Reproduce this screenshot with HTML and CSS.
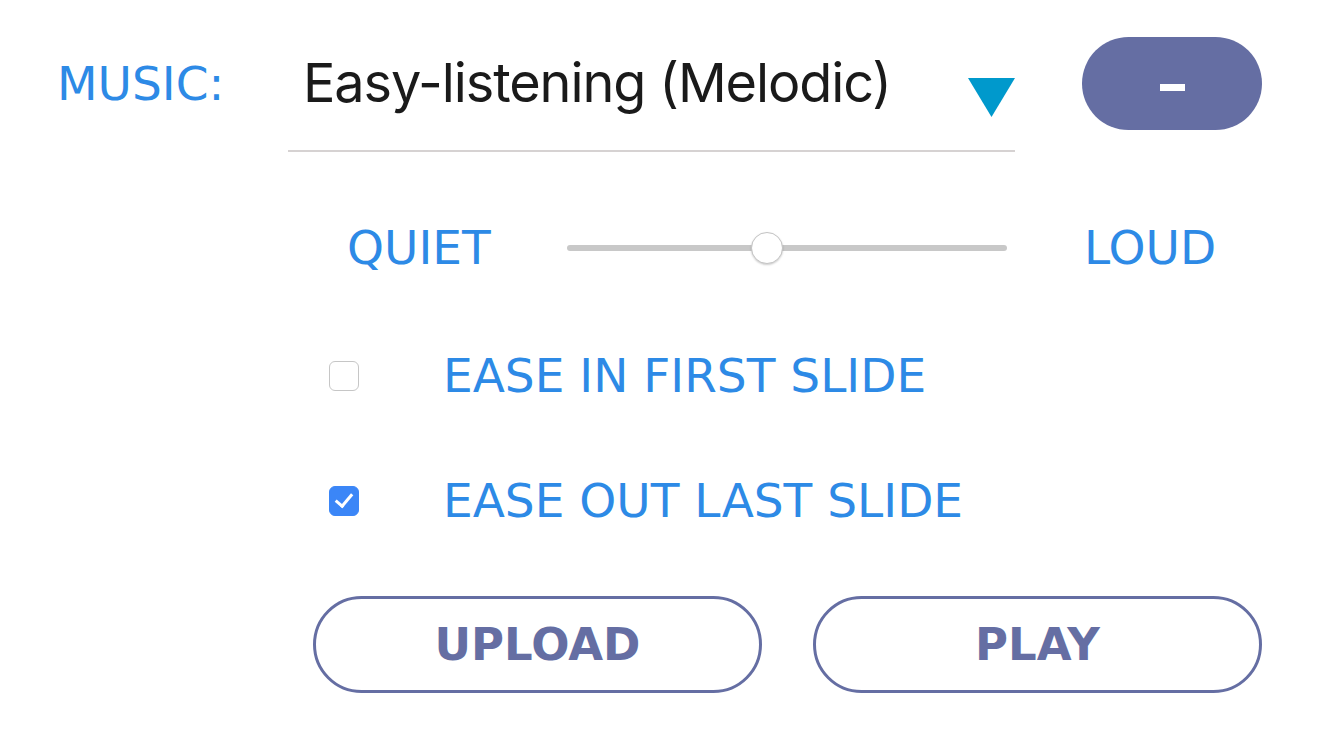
FILE: index.html
```html
<!DOCTYPE html>
<html>
<head>
	<title>Music</title>
	<link rel="stylesheet" href="styles.css">
</head>
<body>
	<div class="panel">
		<div class="row music">
			<span class="label">MUSIC:</span>
			<div class="select">
				<span class="value">Easy-listening (Melodic)</span>
				<svg class="caret" width="47" height="39" viewBox="0 0 47 39"><polygon points="0,0 47,0 23.5,39" fill="#0099cc"/></svg>
			</div>
			<button type="button" class="pill"><span class="dash"></span></button>
		</div>

		<div class="row volume">
			<span class="label quiet">QUIET</span>
			<input type="range" class="slider" min="0" max="100" value="45">
			<span class="label loud">LOUD</span>
		</div>

		<label class="row check">
			<input type="checkbox">
			<span class="label">EASE IN FIRST SLIDE</span>
		</label>

		<label class="row check">
			<input type="checkbox" checked>
			<span class="label">EASE OUT LAST SLIDE</span>
		</label>

		<div class="row actions">
			<button type="button" class="outline">UPLOAD</button>
			<button type="button" class="outline">PLAY</button>
		</div>
	</div>
</body>
</html>
```

FILE: styles.css
```css
body {
	margin: 0;
	background: #fff;
	font-family: "DejaVu Sans", sans-serif;
}

.panel {
	width: 1340px;
	padding-top: 37px;
}

.row {
	display: flex;
	align-items: center;
}

.label {
	color: #2d8ae6;
	font-size: 47px;
	line-height: 60px;
}

/* music row */
.music {
	align-items: flex-start;
	padding-left: 57px;
}

.music .label {
	width: 231px;
	line-height: 93px;
}

.select {
	width: 727px;
	height: 113px;
	border-bottom: 2px solid #d6d2d2;
	display: flex;
	align-items: flex-start;
	padding-left: 15px;
	box-sizing: border-box;
	height: 115px;
}

.select .value {
	flex: 1;
	font-family: Inter, "Liberation Sans", sans-serif;
	font-size: 54px;
	letter-spacing: -1.1px;
	color: #1a1a1a;
	line-height: 92px;
}

.caret {
	margin-top: 41px;
}

.pill {
	width: 180px;
	height: 93px;
	margin-left: 67px;
	border: 0;
	border-radius: 47px;
	background: #656ea3;
	display: flex;
	align-items: center;
	justify-content: center;
	padding: 0;
}

.dash {
	width: 25px;
	height: 7px;
	background: #fff;
	margin-top: 7px;
}

/* volume row */
.volume {
	margin-top: 66px;
	padding-left: 347px;
}

.volume .quiet {
	width: 220px;
}

.volume .loud {
	margin-left: 77px;
}

.slider {
	-webkit-appearance: none;
	appearance: none;
	width: 440px;
	height: 32px;
	margin: 0;
	background: transparent;
}

.slider::-webkit-slider-runnable-track {
	height: 6px;
	border-radius: 3px;
	background: #c8c8c8;
}

.slider::-webkit-slider-thumb {
	-webkit-appearance: none;
	width: 32px;
	height: 32px;
	margin-top: -13px;
	border-radius: 50%;
	background: #fff;
	border: 1px solid #c4c4c4;
	box-sizing: border-box;
	box-shadow: 0 1px 2px rgba(0, 0, 0, 0.2);
}

/* checkboxes */
.check {
	padding-left: 329px;
	margin-top: 68px;
}

.check + .check {
	margin-top: 65px;
}

.check input {
	-webkit-appearance: none;
	appearance: none;
	width: 30px;
	height: 30px;
	margin: 0;
	border: 1.5px solid #c6c6c6;
	border-radius: 6px;
	background: #fff;
	position: relative;
}

.check input:checked {
	background: #3b86f7;
	border-color: #3b86f7;
}

.check input:checked::after {
	content: "";
	position: absolute;
	left: 9px;
	top: 3px;
	width: 7px;
	height: 14px;
	border: solid #fff;
	border-width: 0 3.5px 3.5px 0;
	transform: rotate(40deg);
}

.check .label {
	margin-left: 84px;
}

/* buttons */
.actions {
	margin-top: 65px;
	padding-left: 313px;
	gap: 51px;
}

.outline {
	width: 449px;
	height: 97px;
	border: 3px solid #656ea3;
	border-radius: 49px;
	background: #fff;
	color: #656ea3;
	font-family: "DejaVu Sans", sans-serif;
	font-weight: bold;
	font-size: 45px;
	padding: 0;
}
```
